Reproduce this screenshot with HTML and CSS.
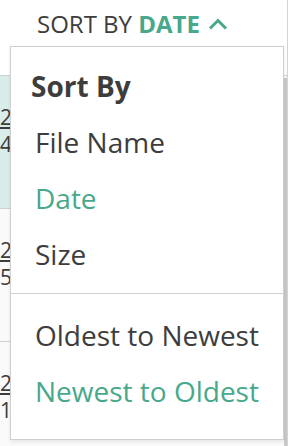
FILE: index.html
```html
<!DOCTYPE html>
<html>
<head>
<meta charset="utf-8">
<link rel="stylesheet" href="styles.css">
</head>
<body>
<div class="page">
  <div class="main">
    <div class="toolbar">
      <span class="sort-label">SORT BY <b class="sort-value">DATE</b></span>
      <svg class="caret" width="20" height="12" viewBox="0 0 20 12"><path d="M2 10.5 L10 2.5 L18 10.5" fill="none" stroke="#48a88b" stroke-width="3"/></svg>
    </div>
    <div class="body">
      <div class="rows">
        <div class="row selected"><span class="l1">2</span><span class="l2">4</span></div>
        <div class="row"><span class="l1">2</span><span class="l2">5</span></div>
        <div class="row"><span class="l1">2</span><span class="l2">1</span></div>
      </div>
      <div class="scrollbar"></div>
    </div>
  </div>
  <div class="edge"></div>

  <div class="menu">
    <div class="group">
      <div class="heading">Sort By</div>
      <div class="item">File Name</div>
      <div class="item active">Date</div>
      <div class="item">Size</div>
    </div>
    <div class="group second">
      <div class="item">Oldest to Newest</div>
      <div class="item active">Newest to Oldest</div>
    </div>
  </div>
</div>
</body>
</html>
```
FILE: styles.css
```css
html, body { margin: 0; padding: 0; }
body {
  font-family: "Open Sans", "DejaVu Sans", sans-serif;
  color: #3d3d3d;
  background: #fff;
  width: 292px;
  height: 446px;
  overflow: hidden;
}
.page {
  position: relative;
  display: flex;
  width: 292px;
  height: 446px;
  overflow: hidden;
}
.main {
  width: 287px;
  display: flex;
  flex-direction: column;
  background: #fafafa;
  min-height: 0;
}
.edge {
  width: 1px;
  background: #d4d4d4;
}
.toolbar {
  height: 76px;
  flex: none;
  box-sizing: border-box;
  border-bottom: 1px solid #d0d0d0;
  display: flex;
  align-items: flex-start;
  padding: 8px 0 0 37px;
  gap: 8px;
  background: #fff;
}
.sort-label {
  font-size: 24px;
  line-height: 32px;
  color: #3d3d3d;
}
.sort-value { color: #48a88b; font-weight: 700; }
.caret { margin-top: 10px; }
.body {
  flex: 1;
  min-height: 0;
  overflow: hidden;
  display: flex;
}
.rows {
  flex: 1;
  display: flex;
  flex-direction: column;
  overflow: hidden;
}
.row {
  height: 133px;
  flex: none;
  border-bottom: 1px solid #d0d0d0;
  display: flex;
  flex-direction: column;
  align-items: flex-start;
  padding: 28px 0 0 0;
  box-sizing: border-box;
  font-size: 21px;
  line-height: 27px;
  background: #fafafa;
}
.row.selected { background: #d9eeea; }
.l1 { text-decoration: underline; }
.scrollbar {
  width: 3px;
  background: #c9c9c9;
  margin-top: 2px;
}
.menu {
  position: absolute;
  left: 10px;
  top: 46px;
  width: 274px;
  height: 394px;
  box-sizing: border-box;
  background: #fff;
  border: 1px solid #cfcfcf;
  box-shadow: 0 2px 4px rgba(0,0,0,0.08);
  display: flex;
  flex-direction: column;
}
.group {
  padding: 11px 0 11px;
  border-bottom: 1px solid #d0d0d0;
}
.group.second {
  border-bottom: none;
  padding: 13px 0 0;
}
.heading {
  font-size: 28px;
  font-weight: 700;
  line-height: 56px;
  padding-left: 20px;
  color: #3d3d3d;
}
.item {
  font-size: 28px;
  line-height: 56px;
  padding-left: 24px;
  color: #3d3d3d;
}
.item.active { color: #48a88b; }
```
